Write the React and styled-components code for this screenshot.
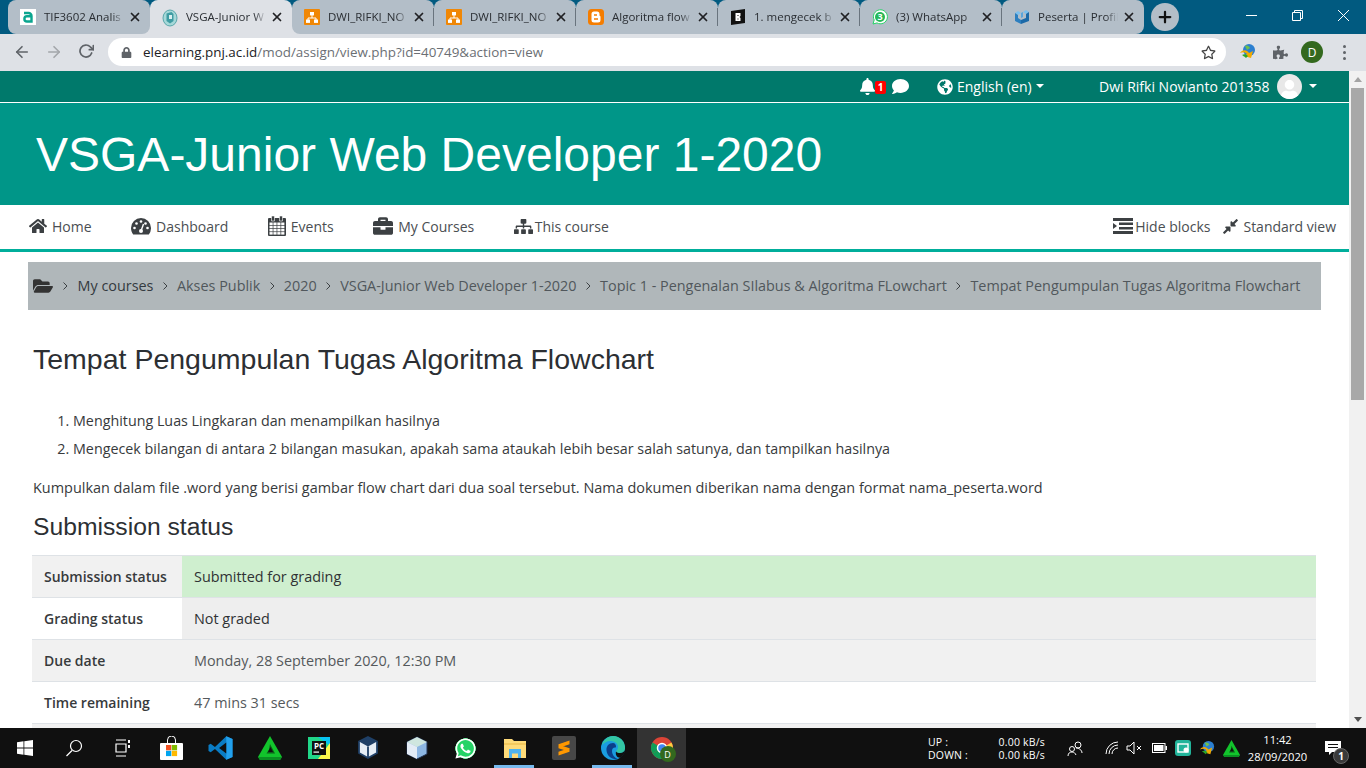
import React from 'react';
import styled, { createGlobalStyle } from 'styled-components';
import {
  FaHome, FaBriefcase, FaSitemap, FaFolderOpen,
  FaBell, FaComment, FaGlobeAmericas, FaCompressAlt, FaPuzzlePiece, FaRegStar, FaLock,
  FaWhatsapp, FaUser,
} from 'react-icons/fa';
import { FiArrowLeft, FiArrowRight, FiRotateCw, FiX, FiPlus } from 'react-icons/fi';

const Global = createGlobalStyle`
  html, body { margin: 0; padding: 0; height: 768px; overflow: hidden; background: #fff; }
  body { font-family: "Open Sans", "Noto Sans", sans-serif; color: #373a3c; }
  * { box-sizing: border-box; }
`;

const Screen = styled.div`
  width: 1366px;
  height: 768px;
  display: flex;
  flex-direction: column;
  overflow: hidden;
`;

/* ---- browser chrome ---- */
const TabStrip = styled.div`
  height: 34px;
  background: linear-gradient(#dee1e6, #dee1e6) 140px 100% / 165px 10px no-repeat, #015a80;
  display: flex;
  align-items: stretch;
  padding-left: 8px;
  flex: none;
`;
const Tab = styled.div`
  width: 142px;
  flex: none;
  display: flex;
  align-items: center;
  padding: 0 7px 0 12px;
  background: ${(p) => (p.$active ? '#dee1e6' : '#b3bec8')};
  border-radius: 8px 8px ${(p) => (p.$roundRight ? '8px' : '0')} ${(p) => (p.$roundLeft ? '8px' : '0')};
  position: relative;
  font-size: 11.5px;
  color: #2a2e33;
  &::after {
    content: '';
    display: ${(p) => (p.$sep ? 'block' : 'none')};
    position: absolute;
    right: 0;
    top: 8px;
    height: 18px;
    width: 1px;
    background: #69747e;
  }
`;
const TabIcon = styled.span`
  width: 16px;
  height: 16px;
  flex: none;
  margin-right: 8px;
  display: flex;
  svg { display: block; }
`;
const TabTitle = styled.span`
  flex: 1;
  white-space: nowrap;
  overflow: hidden;
  padding-bottom: 2px;
  -webkit-mask-image: linear-gradient(90deg, #000 85%, transparent 100%);
  mask-image: linear-gradient(90deg, #000 85%, transparent 100%);
`;
const TabClose = styled.span`
  width: 16px;
  height: 16px;
  flex: none;
  margin-left: 3px;
  display: flex;
  align-items: center;
  justify-content: center;
  color: #202124;
`;
const NewTab = styled.div`
  width: 28px;
  height: 28px;
  border-radius: 50%;
  background: #b3bec8;
  margin: 3px 0 0 7px;
  display: flex;
  align-items: center;
  justify-content: center;
  color: #111;
`;
const WindowButtons = styled.div`
  margin-left: auto;
  display: flex;
  color: #fff;
`;
const WindowButton = styled.div`
  width: 46px;
  height: 30px;
  display: flex;
  align-items: center;
  justify-content: center;
`;
const Toolbar = styled.div`
  height: 37px;
  background: #dee1e6;
  display: flex;
  align-items: center;
  flex: none;
  padding-bottom: 1px;
  color: #5f6368;
`;
const NavButton = styled.div`
  width: 32px;
  display: flex;
  justify-content: center;
  color: ${(p) => (p.$off ? '#a3a6aa' : '#5f6368')};
`;
const NavButtons = styled.div`
  display: flex;
  padding-left: 6px;
`;
const Omnibox = styled.div`
  margin-left: 6px;
  width: 1118px;
  height: 28px;
  background: #fff;
  border-radius: 14px;
  display: flex;
  align-items: center;
  padding: 0 10px 0 13px;
  font-size: 13.42px;
  color: #6b6f74;
`;
const Host = styled.span`
  color: #202124;
`;
const UrlText = styled.span`
  margin-left: 11px;
  flex: 1;
`;
const ToolIcons = styled.div`
  display: flex;
  align-items: center;
  margin-left: 6px;
`;
const ToolIcon = styled.div`
  width: 32px;
  display: flex;
  justify-content: center;
  align-items: center;
`;
const Avatar = styled.div`
  width: 22px;
  height: 22px;
  border-radius: 50%;
  background: #33691e;
  color: #fff;
  font-size: 12px;
  display: flex;
  align-items: center;
  justify-content: center;
`;
const Dots = styled.div`
  display: flex;
  flex-direction: column;
  gap: 3px;
  i { display: block; width: 3px; height: 3px; border-radius: 50%; background: #5f6368; }
`;

/* ---- page ---- */
const Viewport = styled.div`
  flex: 1;
  min-height: 0;
  display: flex;
  overflow: hidden;
`;
const Page = styled.div`
  width: 1349px;
  flex: none;
  overflow: hidden;
`;
const Scrollbar = styled.div`
  flex: 1;
  background: #f1f1f1;
  display: flex;
  flex-direction: column;
  padding: 0 2px;
`;
const ScrollArrow = styled.div`
  height: 17px;
  display: flex;
  align-items: center;
  justify-content: center;
  flex: none;
  &::before {
    content: '';
    border-left: 4px solid transparent;
    border-right: 4px solid transparent;
    ${(p) => (p.$up ? 'border-bottom: 5px solid #a3a3a3;' : 'border-top: 5px solid #505050;')}
  }
`;
const ScrollThumb = styled.div`
  height: 312px;
  background: #a8a8a8;
  flex: none;
`;
const ScrollSpace = styled.div`
  flex: 1;
`;
const TopBar = styled.div`
  height: 32px;
  background: #00796b;
  border-bottom: 1px solid #fff;
  display: flex;
  align-items: center;
  color: #fff;
  font-size: 14px;
`;
const Alerts = styled.div`
  margin-left: 859px;
  display: flex;
  align-items: center;
  width: 78px;
`;
const BellWrap = styled.span`
  position: relative;
  display: flex;
  width: 33px;
`;
const Badge = styled.span`
  position: absolute;
  left: 16px;
  top: 3px;
  width: 11px;
  height: 13px;
  background: #f00;
  color: #fff;
  border-radius: 2px;
  font-size: 10px;
  font-weight: 700;
  line-height: 13px;
  text-align: center;
`;
const Lang = styled.div`
  display: flex;
  align-items: center;
  gap: 4px;
  width: 162px;
`;
const Caret = styled.span`
  display: inline-block;
  border-left: 4px solid transparent;
  border-right: 4px solid transparent;
  border-top: 4px solid #fff;
  margin-bottom: 2px;
`;
const UserName = styled.div`
  display: flex;
  align-items: center;
`;
const UserPic = styled.span`
  width: 25px;
  height: 25px;
  border-radius: 50%;
  background: #e8e8e8;
  overflow: hidden;
  margin: 0 7px;
  display: flex;
  justify-content: center;
  align-items: flex-end;
  color: #fff;
`;
const Banner = styled.div`
  height: 102px;
  background: #009688;
  display: flex;
  align-items: center;
  padding-left: 36px;
  font-family: "Liberation Sans", Arial, sans-serif;
  font-size: 48px;
  color: #fff;
`;
const Nav = styled.div`
  height: 47px;
  background: #fff;
  border-bottom: 3px solid #00ae9b;
  display: flex;
  align-items: center;
  padding: 0 13px 2px 29px;
  font-size: 14px;
  color: #4a4e52;
`;
const NavItem = styled.div`
  display: flex;
  align-items: center;
  gap: ${(p) => p.$gap || 5}px;
  margin-right: ${(p) => (p.$spaced ? '39.5px' : '0')};
  margin-left: ${(p) => p.$left || '0'};
  svg { color: #3c4043; flex: none; }
`;
const Crumbs = styled.div`
  height: 48px;
  margin: 10px 28px 0;
  background: #b0b7ba;
  display: flex;
  align-items: center;
  padding: 0 0 1px 5px;
  font-size: 14.4px;
  color: #51575c;
  white-space: nowrap;
`;
const FolderIcon = styled.span`
  display: flex;
  margin-right: 1px;
`;
const CrumbSep = styled.span`
  margin: 0 8.25px;
  display: flex;
`;
const CrumbLink = styled.span`
  color: ${(p) => (p.$dark ? '#343a40' : '#51575c')};
`;
const Content = styled.div`
  padding: 0 33px;
`;
const Title = styled.h2`
  margin: 32px 0 0;
  font-family: "Liberation Sans", Arial, sans-serif;
  font-weight: 400;
  font-size: 28.5px;
  line-height: 34px;
  color: #2c2f33;
`;
const Steps = styled.ol`
  margin: 31px 0 0;
  padding: 0 0 0 40px;
  font-size: 14.3px;
  line-height: 28px;
  color: #373a3c;
`;
const Note = styled.p`
  margin: 11px 0 0;
  font-size: 14.45px;
  line-height: 28px;
  color: #373a3c;
`;
const SubTitle = styled.h3`
  margin: 8px 0 0;
  font-family: "Liberation Sans", Arial, sans-serif;
  font-weight: 400;
  font-size: 24.7px;
  line-height: 34px;
  color: #2c2f33;
`;
const Table = styled.div`
  margin: 11px 0 0 -1px;
  width: 1284px;
  border-top: 1px solid #dee2e6;
`;
const Row = styled.div`
  display: flex;
  height: 42px;
  border-bottom: 1px solid #dee2e6;
  font-size: 14.4px;
`;
const RowHead = styled.div`
  width: 150px;
  flex: none;
  background: ${(p) => (p.$shade ? '#f1f1f1' : '#fff')};
  font-size: 14px;
  font-weight: 600;
  padding-left: 12px;
  display: flex;
  align-items: center;
`;
const cellColours = { ok: '#cfefcf', grey: '#eee', soft: '#f1f1f1', none: '#fff' };
const RowCell = styled.div`
  flex: 1;
  background: ${(p) => cellColours[p.$tone]};
  color: ${(p) => (p.$muted ? '#55595c' : '#2f3234')};
  padding-left: 12px;
  display: flex;
  align-items: center;
`;

/* ---- taskbar ---- */
const Taskbar = styled.div`
  height: 40px;
  flex: none;
  background: #101010;
  display: flex;
  align-items: stretch;
  color: #fff;
`;
const TaskItem = styled.div`
  width: 49px;
  flex: none;
  display: flex;
  align-items: center;
  justify-content: center;
  position: relative;
  background: ${(p) => (p.$current ? '#333' : 'transparent')};
  &::after {
    content: '';
    display: ${(p) => (p.$running ? 'block' : 'none')};
    position: absolute;
    left: 4px;
    right: 5px;
    bottom: 0;
    height: 3px;
    background: #76b9ed;
  }
`;
const ChromeWrap = styled.span`
  position: relative;
  display: flex;
`;
const ChromeBadge = styled(Avatar)`
  position: absolute;
  right: -3px;
  bottom: -3px;
  width: 16px;
  height: 16px;
  font-size: 9px;
`;
const Tray = styled.div`
  margin-left: auto;
  display: flex;
  align-items: center;
`;
const NetSpeed = styled.div`
  display: flex;
  width: 117px;
  margin-right: 5px;
  padding-top: 1px;
  justify-content: space-between;
  font-size: 10.5px;
  line-height: 13px;
  letter-spacing: 0.2px;
`;
const TrayIcon = styled.div`
  width: ${(p) => p.$w}px;
  display: flex;
  justify-content: center;
  align-items: center;
`;
const Clock = styled.div`
  width: 75px;
  text-align: center;
  font-size: 11.2px;
  line-height: 17px;
`;
const Notify = styled.div`
  width: 46px;
  height: 100%;
  padding-left: 10px;
  position: relative;
  display: flex;
  align-items: center;
`;
const NotifyBadge = styled.span`
  position: absolute;
  left: 18px;
  top: 20px;
  width: 16px;
  height: 16px;
  border-radius: 50%;
  background: #3a3a3a;
  border: 1px solid #666;
  font-size: 10px;
  line-height: 14px;
  text-align: center;
  font-weight: 700;
`;
const TrayEnd = styled.div`
  width: 5px;
  border-left: 1px solid #666;
`;

/* ---- favicons ---- */
const Moodle = () => (
  <svg width="16" height="16" viewBox="0 0 16 16"><rect width="16" height="16" fill="#fff" /><path d="M4 4h4.5A3 3 0 0 1 11.5 7v5.5H7a2.6 2.6 0 0 1 0-5.2h4.5" fill="none" stroke="#0aa58f" strokeWidth="2.4" /></svg>
);
const Shield = () => (
  <svg width="16" height="18" viewBox="0 0 16 18"><ellipse cx="8" cy="9" rx="7" ry="8" fill="#a6d8d8" stroke="#5aa7ab" /><path d="M4.5 4.5l5-1.5 2 2v7l-3.5 2.5-3.5-2.5z" fill="#3f9ca3" /><rect x="7" y="6" width="3" height="4" fill="#d8efef" /></svg>
);
const DrawIo = () => (
  <svg width="16" height="16" viewBox="0 0 16 16"><rect width="16" height="16" rx="1" fill="#f08705" /><path d="M8 6v3M4 11V9h8v2" stroke="#fff" fill="none" /><rect x="6" y="3" width="4" height="3.4" fill="#fff" /><rect x="2" y="10.5" width="4" height="3.4" fill="#fff" /><rect x="10" y="10.5" width="4" height="3.4" fill="#fff" /></svg>
);
const Blogger = () => (
  <svg width="16" height="16" viewBox="0 0 16 16"><rect width="16" height="16" rx="3.5" fill="#f57d00" /><path d="M6 2.5h3A2.5 2.5 0 0 1 11.5 5v1.5l1 1V11a2.5 2.5 0 0 1-2.5 2.5H6A2.5 2.5 0 0 1 3.5 11V5A2.5 2.5 0 0 1 6 2.5z" fill="#fff" /><path d="M6 6h3M6 10h4" stroke="#f57d00" strokeWidth="1.5" /></svg>
);
const BlackB = () => (
  <svg width="16" height="16" viewBox="0 0 16 16"><path d="M1 2l14-2v14L1 16z" fill="#111" /><path d="M5.5 4h5v3l-1 1 1 1v3h-5zM7.5 6v1h1V6zM7.5 9.5v1h1v-1z" fill="#fff" fillRule="evenodd" /></svg>
);
const WaGreen = () => (
  <svg width="16" height="16" viewBox="0 0 16 16"><path d="M1 15l1.2-4a7 7 0 1 1 2.8 2.9z" fill="#fff" stroke="#25d366" /><circle cx="8" cy="8" r="5" fill="#25b858" /><text x="8" y="11" fontSize="9" fontWeight="700" fill="#fff" textAnchor="middle" fontFamily="Open Sans">3</text></svg>
);
const BlueBox = () => (
  <svg width="16" height="16" viewBox="0 0 16 16"><path d="M1 4l3-2 3 2-3 2zM9 3l3-2 3 2-3 2z" fill="#7cc0ee" /><path d="M1 4l3 2v3l3 2v4l-6-3z" fill="#2d7fbf" /><path d="M15 3l-3 2v4l-5 2v4l8-3z" fill="#1c6aa8" /><path d="M7 4l2-1v5l-2 1z" fill="#5aa6dc" /></svg>
);

const tabs = [
  ['TIF3602 Analis', <Moodle />],
  ['VSGA-Junior W', <Shield />],
  ['DWI_RIFKI_NO', <DrawIo />],
  ['DWI_RIFKI_NO', <DrawIo />],
  ['Algoritma flow', <Blogger />],
  ['1. mengecek b', <BlackB />],
  ['(3) WhatsApp', <WaGreen />],
  ['Peserta | Profil', <BlueBox />],
];

/* ---- taskbar + tray drawings ---- */
const IdmIcon = ({ size = 18 }) => (
  <svg width={size} height={size} viewBox="0 0 18 18"><circle cx="10" cy="7" r="6" fill="#2c7fd0" /><path d="M6 3c2-1 4 0 5 2l-3 2z" fill="#6fbf4a" /><path d="M1 10c3-4 7-3 9 0l4-2-2 7-7-2 3-2c-2-2-4-2-7-1z" fill="#f2a900" /><path d="M3 12c2-1 4-1 6 1l-2 2c-2-2-3-2-4-3z" fill="#2aa52a" /></svg>
);
const GreenTri = ({ size = 24 }) => (
  <svg width={size} height={size} viewBox="0 0 24 24"><path d="M12 0L24 21l-2 3H2l-2-3z" fill="#12c42c" /><path d="M0 21h24l-2 3H2z" fill="#0a8f22" /><path d="M12 8l5 9.5H8.5l2.5-4z" fill="#0b5f18" /><path d="M12.5 11l2.5 5H10z" fill="#101010" /></svg>
);
const VsCode = () => (
  <svg width="25" height="24" viewBox="0 0 100 100"><path d="M74 1L100 13V87L74 99 27 54 9 68 0 62V38L9 32 27 46z" fill="#0a7cc4" /><path d="M74 1L100 13V87L74 99z" fill="#22a0ec" /><path d="M74 27L44 50 74 73z" fill="#101010" /></svg>
);
const PyCharm = () => (
  <svg width="22" height="22" viewBox="0 0 22 22"><rect width="22" height="22" fill="#21d789" /><path d="M10 0h12v9z" fill="#07c3f2" /><path d="M22 6v16H10z" fill="#fcf84a" /><rect x="4" y="4" width="14" height="14" fill="#111" /><text x="11" y="11.5" fontSize="8" fontWeight="700" fill="#fff" textAnchor="middle" fontFamily="Open Sans">PC</text><rect x="5.5" y="14.5" width="5.5" height="1.2" fill="#fff" /></svg>
);
const VirtualBox = () => (
  <svg width="20" height="24" viewBox="0 0 20 24"><path d="M10 1l9 4.5V17L10 22 1 17V5.5z" fill="#e6edf5" stroke="#1f3f66" strokeWidth="1.8" /><path d="M10 1l9 4.5-9 5-9-5z" fill="#1f3f66" /><path d="M10 10.5V22" stroke="#1f3f66" strokeWidth="1.8" /></svg>
);
const IceCube = () => (
  <svg width="22" height="24" viewBox="0 0 22 24"><path d="M11 1l10 5v12l-10 5-10-5V6z" fill="#8db6e2" stroke="#20304f" /><path d="M11 1l10 5-10 5L1 6z" fill="#cfe6df" /><path d="M11 11v12L1 18V6z" fill="#e4ecf6" /></svg>
);
const WaTask = styled.span`
  display: flex;
  border-radius: 50%;
  background: radial-gradient(circle, #25d366 62%, transparent 64%);
`;
const Explorer = () => (
  <svg width="22" height="19" viewBox="0 0 22 19"><path d="M0 0h8l2 2h12v17H0z" fill="#ffdb79" /><path d="M0 4h22v2H0z" fill="#f4c95d" /><path d="M5 10h12v9h-3v-4.5H8V19H5z" fill="#4fb3ee" /></svg>
);
const Sublime = () => (
  <svg width="24" height="24" viewBox="0 0 24 24"><rect width="24" height="24" rx="2" fill="#474747" /><path d="M17.5 4.5v3.8L6.5 12V8.2zM17.5 12v3.8L6.5 19.5v-3.8zM6.5 8.5l11 3.7v3.6l-11-3.600z" fill="#ff9800" /></svg>
);
const Edge = () => (
  <svg width="24" height="24" viewBox="0 0 24 24"><circle cx="12" cy="12" r="12" fill="#1a9de0" /><path d="M12 0a12 12 0 0 1 12 13c0 2-2 4-5 4-3 0-4-1-4-2 1-1 2-2 2-4 0-4-4-6-8-6-3 0-6 2-8 4C2 4 7 0 12 0z" fill="#33c6a4" /><path d="M12 7c-4 0-7 3-6.5 7.5C6 20 11 24 17 23c-3-1-6-4-6-8 0-2 1-3.5 3-3.5 1 0 1-.5 1-1C15 9 14 7 12 7z" fill="#0b3f8a" /><path d="M24 13c0 2-2 4-5 4-2 0-3-.5-4-1.5-1 4 2 7 5 6 2.5-2 4-5 4-8.5z" fill="#101010" /></svg>
);
const Chrome = () => (
  <ChromeWrap>
    <svg width="22" height="22" viewBox="0 0 22 22"><circle cx="11" cy="11" r="11" fill="#db4437" /><path d="M11 11L1.5 16.5A11 11 0 0 0 11 22z" fill="#0f9d58" /><path d="M1.5 5.5A11 11 0 0 0 1.5 16.5L11 11z" fill="#0f9d58" /><path d="M11 11l9.5-5.5A11 11 0 0 1 11 22z" fill="#ffcd40" /><circle cx="11" cy="11" r="4.5" fill="#4285f4" stroke="#fff" strokeWidth="1.5" /></svg>
    <ChromeBadge>D</ChromeBadge>
  </ChromeWrap>
);

const task = [
  <svg width="16" height="16" viewBox="0 0 16 16" fill="#fff"><path d="M0 2.2l6.5-.9v6.3H0zM7.3 1.2L16 0v7.6H7.3zM0 8.4h6.5v6.3L0 13.8zM7.3 8.4H16V16l-8.7-1.2z" /></svg>,
  <svg width="18" height="18" viewBox="0 0 18 18" fill="none" stroke="#fff" strokeWidth="1.2"><circle cx="11" cy="7" r="5.5" /><path d="M7 11.5L1.5 17" /></svg>,
  <svg width="16" height="18" viewBox="0 0 16 18" fill="none" stroke="#fff" strokeWidth="1.2"><path d="M1 1h10M1 17h10M1 5h10v8H1z" /><path d="M14 1v3M14 6v3" strokeWidth="2" /></svg>,
  <svg width="23" height="24" viewBox="0 0 23 24"><path d="M7.5 7V4a4 4 0 0 1 8 0v3" fill="none" stroke="#fff" /><rect y="7" width="23" height="17" rx="1" fill="#fff" /><rect x="6" y="9" width="5.3" height="5.3" fill="#f25022" /><rect x="11.8" y="9" width="5.3" height="5.3" fill="#7fba00" /><rect x="6" y="14.8" width="5.3" height="5.3" fill="#00a4ef" /><rect x="11.8" y="14.8" width="5.3" height="5.3" fill="#ffb900" /></svg>,
  <VsCode />,
  <GreenTri />,
  <PyCharm />,
  <VirtualBox />,
  <IceCube />,
  <WaTask><FaWhatsapp size={23} color="#fff" /></WaTask>,
  <Explorer />,
  <Sublime />,
  <Edge />,
  <Chrome />,
];

const crumbs = ['Akses Publik', '2020', 'VSGA-Junior Web Developer 1-2020', 'Topic 1 - Pengenalan SIlabus & Algoritma FLowchart', 'Tempat Pengumpulan Tugas Algoritma Flowchart'];

const Chevron = () => (
  <CrumbSep><svg width="7" height="10" viewBox="0 0 7 10" fill="none" stroke="#3c4043"><path d="M1.5 1.5L5 5 1.5 8.5" /></svg></CrumbSep>
);

/* old font-awesome shapes that the newer set no longer has */
const Gauge = () => (
  <svg width="20" height="18" viewBox="0 0 20 18"><path d="M10 1A10 10 0 0 0 0 11c0 2.5.8 4.7 2.2 6.5h15.6A10 10 0 0 0 20 11 10 10 0 0 0 10 1z" fill="currentColor" /><g fill="#fff"><circle cx="3.5" cy="11" r="1.3" /><circle cx="5.5" cy="6.5" r="1.3" /><circle cx="10" cy="4.5" r="1.3" /><circle cx="14.5" cy="6.5" r="1.3" /><circle cx="16.5" cy="11" r="1.3" /><circle cx="10" cy="14" r="2" /></g><path d="M10 14l2.5-7" stroke="#fff" strokeWidth="1.4" /></svg>
);
const Calendar = () => (
  <svg width="18" height="20" viewBox="0 0 18 20">
    <rect y="2" width="18" height="18" rx="1" fill="currentColor" />
    <path d="M3.5 0h3v5h-3zM11.5 0h3v5h-3z" fill="currentColor" stroke="#fff" strokeWidth=".6" />
    {[0, 1, 2, 3].flatMap((r) => [0, 1, 2, 3].map((c) => (
      <rect key={`${r}-${c}`} x={1.5 + c * 3.9} y={6.5 + r * 3.2} width="3.2" height="2.5" fill="#fff" />
    )))}
  </svg>
);
const HideBlocks = () => (
  <svg width="20" height="16" viewBox="0 0 20 16" fill="currentColor"><rect width="20" height="3" /><rect x="6" y="4.5" width="14" height="2.5" /><rect x="6" y="9" width="14" height="2.5" /><rect y="13" width="20" height="3" /><path d="M0 5l4 3-4 3z" /></svg>
);

export default function App() {
  return (
    <Screen>
      <Global />
      <TabStrip>
        {tabs.map(([title, icon], i) => (
          <Tab key={i} $active={i === 1} $sep={i > 1 && i < 7} $roundLeft={i === 0 || i === 2} $roundRight={i === 0 || i === 7}>
            <TabIcon>{icon}</TabIcon>
            <TabTitle>{title}</TabTitle>
            <TabClose><FiX size={14} strokeWidth={3} /></TabClose>
          </Tab>
        ))}
        <NewTab><FiPlus size={18} strokeWidth={3} /></NewTab>
        <WindowButtons>
          <WindowButton><svg width="11" height="11" viewBox="0 0 11 11" stroke="#fff"><path d="M0 5.5h11" /></svg></WindowButton>
          <WindowButton><svg width="11" height="11" viewBox="0 0 11 11" stroke="#fff" fill="none"><path d="M.5 2.5h8v8h-8zM2.5 2.5v-2h8v8h-2" /></svg></WindowButton>
          <WindowButton><svg width="11" height="11" viewBox="0 0 11 11" stroke="#fff"><path d="M0 0l11 11M11 0L0 11" /></svg></WindowButton>
        </WindowButtons>
      </TabStrip>
      <Toolbar>
        <NavButtons>
          <NavButton><FiArrowLeft size={18} strokeWidth={2.2} /></NavButton>
          <NavButton $off><FiArrowRight size={18} strokeWidth={2.2} /></NavButton>
          <NavButton><FiRotateCw size={16} strokeWidth={2.6} /></NavButton>
        </NavButtons>
        <Omnibox>
          <FaLock size={11} color="#5f6368" />
          <UrlText><Host>elearning.pnj.ac.id</Host>/mod/assign/view.php?id=40749&amp;action=view</UrlText>
          <FaRegStar size={15} color="#444" />
        </Omnibox>
        <ToolIcons>
          <ToolIcon><IdmIcon /></ToolIcon>
          <ToolIcon><FaPuzzlePiece size={15} color="#5f6368" /></ToolIcon>
          <ToolIcon><Avatar>D</Avatar></ToolIcon>
          <ToolIcon><Dots><i /><i /><i /></Dots></ToolIcon>
        </ToolIcons>
      </Toolbar>
      <Viewport>
        <Page>
          <TopBar>
            <Alerts>
              <BellWrap><FaBell size={17} /><Badge>1</Badge></BellWrap>
              <FaComment size={17} />
            </Alerts>
            <Lang><FaGlobeAmericas size={16} />English (en)<Caret /></Lang>
            <UserName>Dwi Rifki Novianto 201358<UserPic><FaUser size={19} /></UserPic><Caret /></UserName>
          </TopBar>
          <Banner>VSGA-Junior Web Developer 1-2020</Banner>
          <Nav>
            <NavItem $spaced><FaHome size={18} />Home</NavItem>
            <NavItem $spaced><Gauge />Dashboard</NavItem>
            <NavItem $spaced><Calendar />Events</NavItem>
            <NavItem $spaced><FaBriefcase size={20} />My Courses</NavItem>
            <NavItem $gap={2}><FaSitemap size={19} />This course</NavItem>
            <NavItem $gap={2} $left="auto"><HideBlocks />Hide blocks</NavItem>
            <NavItem $gap={4} $left="12px"><FaCompressAlt size={17} />Standard view</NavItem>
          </Nav>
          <Crumbs>
            <FolderIcon><FaFolderOpen size={20} color="#333" /></FolderIcon>
            <Chevron />
            <CrumbLink $dark>My courses</CrumbLink>
            {crumbs.map((c) => (
              <React.Fragment key={c}><Chevron /><CrumbLink>{c}</CrumbLink></React.Fragment>
            ))}
          </Crumbs>
          <Content>
            <Title>Tempat Pengumpulan Tugas Algoritma Flowchart</Title>
            <Steps>
              <li>Menghitung Luas Lingkaran dan menampilkan hasilnya</li>
              <li>Mengecek bilangan di antara 2 bilangan masukan, apakah sama ataukah lebih besar salah satunya, dan tampilkan hasilnya</li>
            </Steps>
            <Note>Kumpulkan dalam file .word yang berisi gambar flow chart dari dua soal tersebut. Nama dokumen diberikan nama dengan format nama_peserta.word</Note>
            <SubTitle>Submission status</SubTitle>
            <Table>
              <Row><RowHead $shade>Submission status</RowHead><RowCell $tone="ok">Submitted for grading</RowCell></Row>
              <Row><RowHead>Grading status</RowHead><RowCell $tone="grey">Not graded</RowCell></Row>
              <Row><RowHead $shade>Due date</RowHead><RowCell $tone="soft" $muted>Monday, 28 September 2020, 12:30 PM</RowCell></Row>
              <Row><RowHead>Time remaining</RowHead><RowCell $tone="none" $muted>47 mins 31 secs</RowCell></Row>
              <Row><RowHead $shade /><RowCell $tone="soft" /></Row>
            </Table>
          </Content>
        </Page>
        <Scrollbar>
          <ScrollArrow $up />
          <ScrollThumb />
          <ScrollSpace />
          <ScrollArrow />
        </Scrollbar>
      </Viewport>
      <Taskbar>
        {task.map((t, i) => (
          <TaskItem key={i} $running={i === 10 || i === 12} $current={i === 13}>{t}</TaskItem>
        ))}
        <Tray>
          <NetSpeed><span>UP :<br />DOWN :</span><span>0.00 kB/s<br />0.00 kB/s</span></NetSpeed>
          <TrayIcon $w={50}><svg width="17" height="17" viewBox="0 0 17 17" fill="none" stroke="#fff"><circle cx="11" cy="5" r="3" /><circle cx="5" cy="9" r="2.5" /><path d="M1 16c0-3 2-4 4-4s3 1 4 3M9 8c3 0 6 2 6 5" /></svg></TrayIcon>
          <TrayIcon $w={24}><svg width="14" height="14" viewBox="0 0 14 14" fill="none" stroke="#fff"><path d="M1 13a12 12 0 0 1 12-12M4 13a9 9 0 0 1 9-9M7 13a6 6 0 0 1 6-6" /></svg></TrayIcon>
          <TrayIcon $w={20}><svg width="17" height="14" viewBox="0 0 17 14" fill="none" stroke="#fff"><path d="M1 5h3l4-4v12l-4-4H1zM11 5l4 4M15 5l-4 4" /></svg></TrayIcon>
          <TrayIcon $w={30}><svg width="15" height="10" viewBox="0 0 15 10"><rect x=".5" y=".5" width="12.5" height="9" fill="none" stroke="#fff" /><rect x="2" y="2" width="9.5" height="6" fill="#fff" /><rect x="13.5" y="3" width="1.5" height="4" fill="#fff" /></svg></TrayIcon>
          <TrayIcon $w={18}><svg width="16" height="16" viewBox="0 0 16 16"><rect width="16" height="16" rx="3" fill="#22b49a" /><rect x="3" y="4" width="10" height="8" fill="none" stroke="#fff" strokeWidth="1.4" /><circle cx="11" cy="10" r="2.5" fill="#fff" /></svg></TrayIcon>
          <TrayIcon $w={30}><IdmIcon size={17} /></TrayIcon>
          <TrayIcon $w={18}><GreenTri size={17} /></TrayIcon>
          <Clock>11:42<br />28/09/2020</Clock>
          <Notify>
            <svg width="16" height="14" viewBox="0 0 16 14"><path d="M0 0h16v11H7l-3 3v-3H0z" fill="#fff" /><path d="M3 3.5h10M3 6.5h10" stroke="#101010" /></svg>
            <NotifyBadge>1</NotifyBadge>
          </Notify>
          <TrayEnd />
        </Tray>
      </Taskbar>
    </Screen>
  );
}
